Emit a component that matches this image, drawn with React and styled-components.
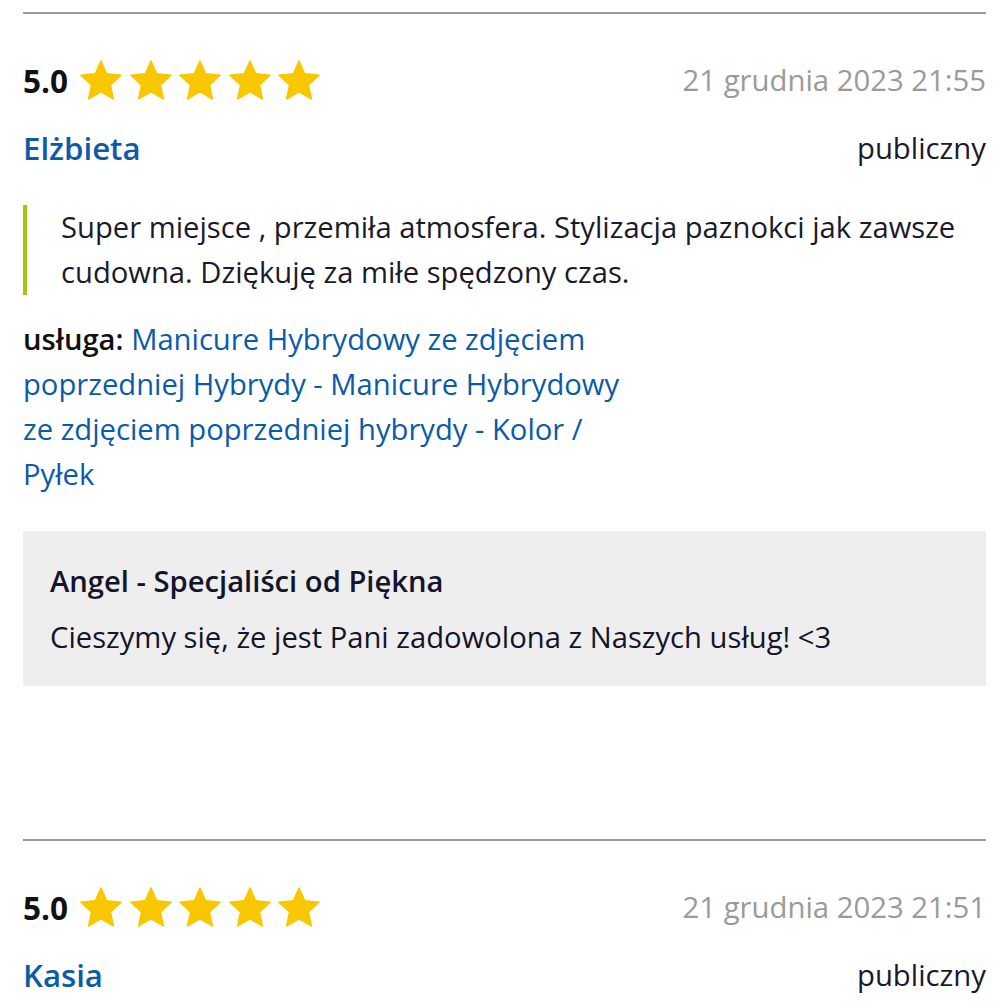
import React from "react";
import styled, { createGlobalStyle } from "styled-components";

const Global = createGlobalStyle`
  html, body { margin: 0; padding: 0; background: #fff; }
  body { font-family: "Open Sans", "Noto Sans", sans-serif; color: #1a1a2a; }
`;

const Page = styled.div`
  padding: 12px 22px 0 23px;
`;

const Review = styled.article`
  border-top: 2px solid #9a9a9a;
  padding-top: 44px;
  padding-bottom: 153px;
`;

const TopRow = styled.div`
  display: flex;
  align-items: center;
  justify-content: space-between;
  height: 44px;
`;

const Rating = styled.div`
  display: flex;
  align-items: center;
  gap: 12px;
`;

const Score = styled.span`
  font-size: 31.5px;
  font-weight: 700;
  color: #111;
`;

const Stars = styled.div`
  display: flex;
  gap: 7.5px;
`;

const DateText = styled.span`
  font-size: 29.3px;
  color: #9a9a9a;
`;

const NameRow = styled.div`
  display: flex;
  align-items: center;
  justify-content: space-between;
  margin-top: 24px;
  height: 44px;
`;

const Author = styled.a`
  font-size: 31.2px;
  font-weight: 600;
  color: #0b5ba8;
  text-decoration: none;
`;

const Visibility = styled.span`
  font-size: 29.3px;
  color: #1a1a2a;
`;

const Quote = styled.blockquote`
  margin: 35px 0 0 0;
  border-left: 4px solid #a9c40f;
  padding: 0 0 0 34px;
  font-size: 29.2px;
  line-height: 45px;
  color: #1a1a2a;
`;

const Service = styled.p`
  margin: 22px 0 0 0;
  max-width: 615px;
  font-size: 29.2px;
  line-height: 45px;
`;

const ServiceLabel = styled.b`
  font-weight: 600;
  color: #111;
`;

const ServiceLink = styled.a`
  color: #0b5ba8;
  text-decoration: none;
`;

const ReplyBox = styled.div`
  margin-top: 34px;
  background: #eeeeee;
  padding: 27.5px 27px 26.5px 27px;
`;

const ReplyTitle = styled.div`
  font-size: 29.2px;
  font-weight: 600;
  line-height: 45px;
  color: #14142a;
`;

const ReplyText = styled.div`
  margin-top: 11px;
  font-size: 29.2px;
  line-height: 45px;
  color: #14142a;
`;

const Star = () => (
  <svg width="42" height="40" viewBox="0 0 42 40" aria-hidden="true">
    <path
      d="M21 0.8 L26.7 13.6 L41.2 15.2 L30.6 25.1 L33.6 39.2 L21 32.1 L8.4 39.2 L11.4 25.1 L0.8 15.2 L15.3 13.6 Z"
      fill="#f9c700"
      stroke="#f9c700"
      strokeWidth="1.2"
      strokeLinejoin="round"
    />
  </svg>
);

const reviews = [
  {
    score: "5.0",
    date: "21 grudnia 2023 21:55",
    author: "Elżbieta",
    text: "Super miejsce , przemiła atmosfera. Stylizacja paznokci jak zawsze cudowna. Dziękuję za miłe spędzony czas.",
    service:
      "Manicure Hybrydowy ze zdjęciem poprzedniej Hybrydy - Manicure Hybrydowy ze zdjęciem poprzedniej hybrydy - Kolor / Pyłek",
    reply: {
      title: "Angel - Specjaliści od Piękna",
      text: "Cieszymy się, że jest Pani zadowolona z Naszych usług! <3",
    },
  },
  {
    score: "5.0",
    date: "21 grudnia 2023 21:51",
    author: "Kasia",
  },
];

export default function App() {
  return (
    <>
      <Global />
      <Page>
        {reviews.map((r, i) => (
          <Review key={i}>
            <TopRow>
              <Rating>
                <Score>{r.score}</Score>
                <Stars>
                  {[0, 1, 2, 3, 4].map((s) => (
                    <Star key={s} />
                  ))}
                </Stars>
              </Rating>
              <DateText>{r.date}</DateText>
            </TopRow>
            <NameRow>
              <Author href="#">{r.author}</Author>
              <Visibility>publiczny</Visibility>
            </NameRow>
            {r.text && <Quote>{r.text}</Quote>}
            {r.service && (
              <Service>
                <ServiceLabel>usługa:</ServiceLabel>{" "}
                <ServiceLink href="#">{r.service}</ServiceLink>
              </Service>
            )}
            {r.reply && (
              <ReplyBox>
                <ReplyTitle>{r.reply.title}</ReplyTitle>
                <ReplyText>{r.reply.text}</ReplyText>
              </ReplyBox>
            )}
          </Review>
        ))}
      </Page>
    </>
  );
}
